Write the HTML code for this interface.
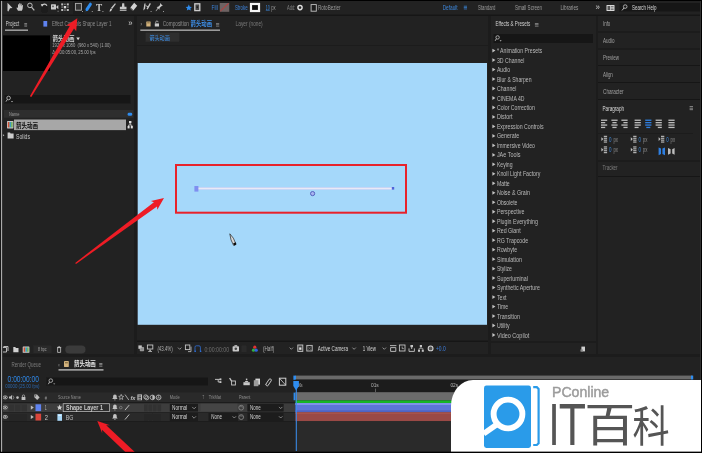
<!DOCTYPE html>
<html><head><meta charset="utf-8"><title>After Effects</title>
<style>
html,body{margin:0;padding:0;background:#232323}
body{width:702px;height:453px;overflow:hidden}
svg{display:block;position:absolute;left:0;top:0}
text{font-family:"Liberation Sans","Noto Sans CJK SC",sans-serif;white-space:pre}
</style></head><body>
<svg width="702" height="453" viewBox="0 0 702 453">
<defs><filter id="sb" x="0" y="0" width="100%" height="100%" filterUnits="userSpaceOnUse"><feGaussianBlur stdDeviation="0.35"/></filter></defs>
<g filter="url(#sb)">
<rect x="0" y="0" width="702" height="453" fill="#232323" />
<rect x="0" y="14.5" width="702" height="1.5" fill="#141414" />
<rect x="134.4" y="16" width="2" height="340" fill="#1a1a1a" />
<rect x="488.5" y="16" width="2.5" height="340" fill="#1a1a1a" />
<rect x="596" y="16" width="2" height="340" fill="#1a1a1a" />
<rect x="0" y="354.5" width="702" height="2.5" fill="#1a1a1a" />
<path d="M7.5 2.8l5 5.2l-2.5 0.3l-1.6 3.2l-0.9-0.4z" fill="#c8c8c8" />
<path d="M18 10.8l-1.4-2.6l0.3-0.9l1.1 0.7v-3.6l0.9-0.2l0.3 2v-2.9l1-0.1l0.2 2.9l0.3-2.5l0.9 0.1l0.1 2.9l0.5-1.7l0.8 0.3l-0.4 3.7l-0.8 1.9z" fill="#c8c8c8" />
<circle cx="29.9" cy="5.4" r="2.3" fill="none" stroke="#bdbdbd" stroke-width="1"/>
<path d="M31.5 7.2l2.8 3.2" fill="none" stroke="#bdbdbd" stroke-width="1.2" />
<circle cx="44.3" cy="9.4" r="3.6" fill="#1b1b1b"/>
<path d="M42 6a2.6 2.6 0 0 1 4.9 -0.2" fill="none" stroke="#c8c8c8" stroke-width="1.2" />
<path d="M40.8 4l2.8 0.2l-1.6 2.6z" fill="#c8c8c8" />
<rect x="51" y="4.2" width="5" height="5.4" fill="#cccccc" rx="0.6"/>
<path d="M56 6.9l2.3-2v4.4z" fill="#cccccc" />
<rect x="52.2" y="5.6" width="1.6" height="1.6" fill="#555" />
<path d="M57.6 10.8h1v1h-1z" fill="#999" />
<rect x="61.2" y="3.4" width="2" height="2" fill="#bdbdbd" />
<rect x="66.8" y="3.4" width="2" height="2" fill="#bdbdbd" />
<rect x="61.2" y="9" width="2" height="2" fill="#bdbdbd" />
<rect x="66.8" y="9" width="2" height="2" fill="#bdbdbd" />
<rect x="64.2" y="3.6" width="1.4" height="1.4" fill="#8c8c8c" />
<rect x="61.4" y="6.4" width="1.4" height="1.4" fill="#8c8c8c" />
<rect x="67.2" y="6.4" width="1.4" height="1.4" fill="#8c8c8c" />
<rect x="64.2" y="9.4" width="1.4" height="1.4" fill="#8c8c8c" />
<rect x="63.8" y="6" width="2.4" height="2.4" fill="#dcdcdc" />
<rect x="73.4" y="1.6" width="10.4" height="12.4" fill="#1c1c1c" />
<rect x="75.4" y="3.4" width="6" height="6.8" fill="#333" stroke="#b0b0b0" stroke-width="0.9"/>
<path d="M82 11h1v1h-1z" fill="#999" />
<path d="M87 9.4L90.4 4.2" fill="none" stroke="#2f8df0" stroke-width="3" stroke-linecap="round"/>
<path d="M85.6 11.4l0.6-2.2l1.6 1z" fill="#2f8df0" />
<path d="M91.8 11h1v1h-1z" fill="#999" />
<text x="96" y="10.6" font-size="10.6" fill="#cccccc" style="font-family:'Liberation Serif',serif;font-weight:bold" textLength="6.2" lengthAdjust="spacingAndGlyphs">T</text>
<path d="M102.4 11h1v1h-1z" fill="#999" />
<path d="M115 3.2l0.9 0.8l-3.8 5l-1.2-0.9z" fill="#c8c8c8" />
<path d="M110.6 8.4l1.6 1.2l-1.4 1.6l-1.4 0.2z" fill="#d8d8d8" />
<path d="M122.2 3.2h2l0.3 3.6h2v2.4h-6.6v-2.4h2z" fill="#c8c8c8" />
<rect x="119.8" y="9.8" width="6.7" height="1" fill="#c8c8c8" />
<path d="M134.2 2.8l3 3l-3.8 4.6l-3-2.8z" fill="#d4d4d4" />
<path d="M130.4 7.6l3 2.8l-0.9 0.6l-2.7-2.4z" fill="#5a5a5a" />
<path d="M144.4 3.4l1.2 0.2l-0.5 5.2l-1.8 1.8z M149.8 3l1.1 0.7l-3.2 5.8l-1.2-0.7z" fill="#c8c8c8" />
<path d="M145.6 5.6l2.6 1.2" fill="none" stroke="#c8c8c8" stroke-width="0.9" />
<path d="M150.6 11h1v1h-1z" fill="#999" />
<path d="M160 3l2.8 2.8l-1.5 0.4l-1.7 1.9l-0.2 1.6l-1.1-1.1l-2.3 2.7l-0.4-0.3l2.1-2.9l-1.1-1.1l1.6-0.2l1.9-1.9z" fill="#cccccc" />
<path d="M163 11h1v1h-1z" fill="#999" />
<path d="M188.8 4.6l1 2.1l2.1 0.2l-1.6 1.5l0.5 2.2l-2-1.1l-2 1.1l0.5-2.2l-1.6-1.5l2.1-0.2z" fill="#2f8df0" />
<rect x="194.8" y="3.8" width="5" height="6.8" fill="#444" stroke="#cccccc" stroke-width="1.3"/>
<rect x="196.6" y="6.4" width="1.4" height="1.6" fill="#1a1a1a" />
<text x="211.4" y="9.9" font-size="6.3" fill="#3b80d8" textLength="6.4" lengthAdjust="spacingAndGlyphs" >Fill</text>
<rect x="219.8" y="3" width="9.4" height="8.8" fill="#6e6464" />
<path d="M220.4 11l8.2-7.6" fill="none" stroke="#d03030" stroke-width="0.9" />
<text x="234.9" y="9.9" font-size="6.3" fill="#3b80d8" textLength="12.8" lengthAdjust="spacingAndGlyphs" >Stroke</text>
<rect x="251" y="4" width="8" height="7" fill="#0a0a0a" stroke="#f4f4f4" stroke-width="2.2"/>
<text x="265.8" y="9.6" font-size="6.3" fill="#3b86dc" textLength="4" lengthAdjust="spacingAndGlyphs" >10</text>
<rect x="265.8" y="10.4" width="4" height="0.5" fill="#3b86dc" />
<text x="271.2" y="9.6" font-size="6.3" fill="#9a9a9a" textLength="4.3" lengthAdjust="spacingAndGlyphs" >px</text>
<text x="286.9" y="9.9" font-size="6.3" fill="#7e7e7e" textLength="8.5" lengthAdjust="spacingAndGlyphs" >Add:</text>
<circle cx="300" cy="7.6" r="2.1" fill="#222" stroke="#e0e0e0" stroke-width="1.4"/>
<rect x="311.1" y="4.6" width="5.2" height="6.6" fill="#1c1c1c" stroke="#c4c4c4" stroke-width="0.9"/>
<text x="318" y="9.6" font-size="6.3" fill="#9a9a9a" textLength="22.6" lengthAdjust="spacingAndGlyphs" >RotoBezier</text>
<text x="442.7" y="9.6" font-size="6.3" fill="#3b86dc" textLength="15" lengthAdjust="spacingAndGlyphs" >Default</text>
<rect x="463.8" y="5.8" width="3.2" height="0.7" fill="#3b86dc" />
<rect x="463.8" y="7.199999999999999" width="3.2" height="0.7" fill="#3b86dc" />
<rect x="463.8" y="8.6" width="3.2" height="0.7" fill="#3b86dc" />
<text x="478" y="9.6" font-size="6.3" fill="#9a9a9a" textLength="17.4" lengthAdjust="spacingAndGlyphs" >Standard</text>
<text x="515" y="9.6" font-size="6.3" fill="#9a9a9a" textLength="27" lengthAdjust="spacingAndGlyphs" >Small Screen</text>
<text x="560.5" y="9.6" font-size="6.3" fill="#9a9a9a" textLength="17.8" lengthAdjust="spacingAndGlyphs" >Libraries</text>
<text x="595.6" y="10.2" font-size="8.5" fill="#d0d0d0" textLength="4.4" lengthAdjust="spacingAndGlyphs" >»</text>
<rect x="606.5" y="5" width="8" height="6" fill="#d8d8d8" rx="0.5"/>
<rect x="607.5" y="6" width="2.6" height="4" fill="#555" />
<rect x="610.8" y="6.2" width="2.8" height="0.7" fill="#555" />
<rect x="610.8" y="7.7" width="2.8" height="0.7" fill="#555" />
<rect x="610.8" y="9.2" width="2.8" height="0.7" fill="#555" />
<rect x="619.6" y="3" width="80.4" height="8.8" fill="#191919" />
<circle cx="625.2" cy="6.6" r="1.8" fill="none" stroke="#c8c8c8" stroke-width="0.8"/>
<path d="M624 8L622 10.4" fill="none" stroke="#c8c8c8" stroke-width="0.9" />
<text x="632" y="9.6" font-size="6.3" fill="#d6d6d6" textLength="24.4" lengthAdjust="spacingAndGlyphs" >Search Help</text>
<rect x="3" y="35.5" width="47" height="35.5" fill="#000" />
<text x="52.5" y="41.3" font-size="6.6" fill="#d2d2d2" textLength="22" lengthAdjust="spacingAndGlyphs" font-weight="bold">箭头动画</text>
<path d="M76.3 37.6h3.6l-1.8 2.6z" fill="#d2d2d2" />
<text x="52.3" y="47.4" font-size="5.6" fill="#a8a8a8" textLength="58.4" lengthAdjust="spacingAndGlyphs" >1920 x 1080  (960 x 540) (1.00)</text>
<text x="52.3" y="54.3" font-size="5.6" fill="#a8a8a8" textLength="43.4" lengthAdjust="spacingAndGlyphs" >Δ 0:00:05:00, 25.00 fps</text>
<text x="5.7" y="25.6" font-size="6.3" fill="#d0d0d0" textLength="13.5" lengthAdjust="spacingAndGlyphs" >Project</text>
<rect x="24.3" y="23.4" width="2.8" height="0.6" fill="#b0b0b0" />
<rect x="24.3" y="24.599999999999998" width="2.8" height="0.6" fill="#b0b0b0" />
<rect x="24.3" y="25.799999999999997" width="2.8" height="0.6" fill="#b0b0b0" />
<rect x="5" y="29.6" width="23" height="1.1" fill="#cfcfcf" />
<rect x="43.4" y="21" width="3.8" height="5.6" fill="#5f83f0" />
<text x="52" y="25.6" font-size="6.3" fill="#8c8c8c" textLength="59.4" lengthAdjust="spacingAndGlyphs" >Effect Controls Shape Layer 1</text>
<text x="128.2" y="26.2" font-size="8.5" fill="#d0d0d0" textLength="4.2" lengthAdjust="spacingAndGlyphs" >»</text>
<rect x="4.4" y="94.8" width="126.2" height="9" fill="#191919" />
<circle cx="8.6" cy="98" r="1.8" fill="none" stroke="#c0c0c0" stroke-width="0.8"/>
<path d="M7.4 99.4L6 101.6" fill="none" stroke="#c0c0c0" stroke-width="0.9" />
<path d="M11 101h2l-1 1.2z" fill="#c0c0c0" />
<rect x="4" y="110" width="129.5" height="7.6" fill="#2f2f2f" />
<text x="9" y="115.6" font-size="5" fill="#9a9a9a" textLength="10.5" lengthAdjust="spacingAndGlyphs" >Name</text>
<rect x="127.6" y="112.8" width="4.6" height="3" fill="#2f8df0" rx="1.4"/>
<rect x="14" y="119.5" width="112" height="10.6" fill="#a7a7a7" />
<text x="16" y="127.6" font-size="6.6" fill="#0c0c0c" textLength="22" lengthAdjust="spacingAndGlyphs" font-weight="bold">箭头动画</text>
<rect x="7" y="121" width="6.4" height="7.4" fill="#c9c9c9" rx="0.6"/>
<rect x="7.8" y="122" width="1.8" height="5.4" fill="#d05030" />
<rect x="9.6" y="122" width="1.6" height="5.4" fill="#3aa0c0" />
<rect x="11.2" y="122" width="1.4" height="5.4" fill="#6ab050" />
<rect x="129" y="121" width="2.4" height="2.2" fill="#e0e0e0" />
<rect x="127.6" y="126" width="2" height="2.4" fill="#e0e0e0" />
<rect x="130.8" y="126" width="2" height="2.4" fill="#e0e0e0" />
<path d="M130.2 123v2M128.6 126v-1h3.2v1" fill="none" stroke="#e0e0e0" stroke-width="0.7" />
<path d="M1.8 133.6l2.6 1.7l-2.6 1.7z" fill="#c0c0c0" />
<path d="M7.6 132.6h2.4l0.6 0.8h3v5h-6z" fill="#cdcdcd" />
<text x="16" y="138.6" font-size="6.6" fill="#c4c4c4" textLength="14" lengthAdjust="spacingAndGlyphs" >Solids</text>
<path d="M2 347.5h4.5v4.5h-4.5z M3.5 346.5h4.5v4.5" fill="none" stroke="#c8c8c8" stroke-width="0.9" />
<path d="M13.3 347h2l0.6 0.9h2.6v4.4h-5.2z" fill="#d0d0d0" />
<rect x="22.7" y="346.4" width="6.7" height="6.4" fill="#cfcfcf" rx="0.6"/>
<rect x="23.6" y="347.4" width="1.8" height="4.4" fill="#d05030" />
<rect x="25.4" y="347.4" width="1.7" height="4.4" fill="#3aa0c0" />
<rect x="27.1" y="347.4" width="1.5" height="4.4" fill="#6ab050" />
<rect x="33.3" y="345.6" width="18" height="7.6" fill="#2c2c2c" />
<text x="38" y="351.4" font-size="5.6" fill="#a0a0a0" textLength="8.5" lengthAdjust="spacingAndGlyphs" >8 bpc</text>
<path d="M57.6 347.6h3v4.8h-3z M57 347.4h4.2 M58.4 346.6h1.4" fill="none" stroke="#c4c4c4" stroke-width="0.8" />
<rect x="65.3" y="345.4" width="20.2" height="8" fill="#3b3b3b" rx="4"/>
<rect x="137" y="44.8" width="351.5" height="1" fill="#181818" />
<rect x="136.4" y="45.8" width="352.1" height="295" fill="#202020" />
<rect x="137.7" y="63" width="349.3" height="261.8" fill="#a5d8fa" />
<text x="140.6" y="25.6" font-size="5.5" fill="#8a8a8a" textLength="1.8" lengthAdjust="spacingAndGlyphs" >×</text>
<rect x="146.3" y="21.4" width="4.3" height="5.2" fill="#d2b27c" rx="0.4"/>
<rect x="147.2" y="22.2" width="2.5" height="1.2" fill="#8d744a" />
<rect x="154.8" y="23.4" width="4.2" height="3.1" fill="#c8c8c8" />
<path d="M155.7 23.4v-1.2a1.2 1.2 0 0 1 2.4 0" fill="none" stroke="#c8c8c8" stroke-width="0.7" />
<text x="162.7" y="25.8" font-size="6.3" fill="#8e8e8e" textLength="26.3" lengthAdjust="spacingAndGlyphs" >Composition</text>
<text x="190.6" y="26" font-size="6.6" fill="#3d8fe8" textLength="21.4" lengthAdjust="spacingAndGlyphs" font-weight="bold">箭头动画</text>
<rect x="216" y="23.2" width="3.2" height="0.6" fill="#a0a0a0" />
<rect x="216" y="24.5" width="3.2" height="0.6" fill="#a0a0a0" />
<rect x="216" y="25.8" width="3.2" height="0.6" fill="#a0a0a0" />
<rect x="140.3" y="29.6" width="79.7" height="1.1" fill="#cfcfcf" />
<text x="235.6" y="25.8" font-size="6.3" fill="#7a7a7a" textLength="27.1" lengthAdjust="spacingAndGlyphs" >Layer (none)</text>
<rect x="145.6" y="32.6" width="33.6" height="9" fill="#2f2f2f" />
<text x="149.4" y="39.6" font-size="6.2" fill="#3d8fe8" textLength="20.4" lengthAdjust="spacingAndGlyphs" >箭头动画</text>
<rect x="176" y="165" width="230" height="47.7" fill="none" stroke="#e8202a" stroke-width="2"/>
<rect x="198" y="187.5" width="194" height="2" fill="#e9e9f6" />
<rect x="198" y="187.2" width="194" height="0.5" fill="#c4c8f4" />
<rect x="198" y="189.3" width="194" height="0.4" fill="#c4c8f4" />
<rect x="194.4" y="186" width="4" height="5.6" fill="#7f8ff0" />
<rect x="391.8" y="187" width="2.4" height="2.6" fill="#4f63d8" />
<circle cx="312.6" cy="193.6" r="2.1" fill="#a9b4f0" stroke="#4c58b8" stroke-width="0.9"/>
<path d="M229.8 233.8l3.6 4.4l2.4 5.6l-2.2 1.6l-2.6-5.6z" fill="#d8d8d8" stroke="#222" stroke-width="0.7" />
<path d="M233 243.4l2.8-1.2l0.6 2.4l-2 1.2z" fill="#111" />
<rect x="137" y="340.8" width="351.5" height="1" fill="#181818" />
<path d="M138.4 345.4h3.4v3.4h-3.4z" fill="#c4c4c4" />
<path d="M140.2 347.4h3.4v3.4h-3.4z" fill="#8c8c8c" stroke="#c4c4c4" stroke-width="0.6" />
<rect x="147.4" y="345" width="5.4" height="4" fill="none" stroke="#c4c4c4" stroke-width="0.9"/>
<rect x="149.4" y="349.6" width="1.4" height="1.4" fill="#c4c4c4" />
<rect x="148.2" y="351" width="3.8" height="0.8" fill="#c4c4c4" />
<text x="157.4" y="351" font-size="6.3" fill="#b0b0b0" textLength="15.3" lengthAdjust="spacingAndGlyphs" >(43.4%)</text>
<path d="M178 347.6l1.7 1.7l1.7-1.7" fill="none" stroke="#a8a8a8" stroke-width="0.8" />
<rect x="185.4" y="345" width="4.4" height="4.6" fill="none" stroke="#c4c4c4" stroke-width="0.9"/>
<path d="M188 351.6h3v-5" fill="none" stroke="#c4c4c4" stroke-width="0.8" />
<path d="M195 351.6v-4.4a1.4 1.4 0 0 1 1.4-1.4h2.6a1.4 1.4 0 0 1 1.4 1.4v4.4" fill="none" stroke="#2e6fd6" stroke-width="0.8" />
<rect x="194.5" y="350.6" width="1.4" height="1.4" fill="#2e6fd6" />
<rect x="199.9" y="350.6" width="1.4" height="1.4" fill="#2e6fd6" />
<text x="204.4" y="351.6" font-size="6.3" fill="#6e6e6e" textLength="24.7" lengthAdjust="spacingAndGlyphs" >0:00:00:00</text>
<rect x="232.6" y="346.2" width="6.4" height="5.2" fill="#c8c8c8" rx="0.7"/>
<rect x="234.4" y="345.2" width="2.8" height="1.2" fill="#c8c8c8" />
<circle cx="235.8" cy="348.8" r="1.3" fill="#444"/>
<rect x="241.4" y="345.6" width="5.4" height="6.4" fill="#2b2b2b" />
<circle cx="254.8" cy="347.2" r="1.6" fill="#e03030"/>
<circle cx="253.5" cy="350.2" r="1.6" fill="#30b040"/>
<circle cx="256.2" cy="350.2" r="1.6" fill="#3060e0"/>
<text x="263" y="351.2" font-size="6.3" fill="#b0b0b0" textLength="11.2" lengthAdjust="spacingAndGlyphs" >(Half)</text>
<path d="M289.6 347.6l1.7 1.7l1.7-1.7" fill="none" stroke="#a8a8a8" stroke-width="0.8" />
<rect x="297.8" y="345" width="5" height="6.4" fill="#444" stroke="#c4c4c4" stroke-width="0.9"/>
<rect x="299.2" y="347.4" width="2.2" height="2.4" fill="#e0e0e0" />
<rect x="306.8" y="345.4" width="5.4" height="5.6" fill="none" stroke="#c4c4c4" stroke-width="0.9"/>
<path d="M307 345.6l5 5.2M312 345.6l-5 5.2" fill="none" stroke="#888" stroke-width="0.5" />
<text x="317.8" y="351.2" font-size="6.3" fill="#d6d6d6" textLength="30.2" lengthAdjust="spacingAndGlyphs" >Active Camera</text>
<path d="M352.4 347.6l1.7 1.7l1.7-1.7" fill="none" stroke="#a8a8a8" stroke-width="0.8" />
<text x="362.8" y="351.2" font-size="6.3" fill="#d6d6d6" textLength="13.2" lengthAdjust="spacingAndGlyphs" >1 View</text>
<path d="M382.6 347.6l1.7 1.7l1.7-1.7" fill="none" stroke="#a8a8a8" stroke-width="0.8" />
<path d="M390 345.6h6.4M390.6 347.6h5.2v3.8h-5.2z" fill="none" stroke="#c4c4c4" stroke-width="0.9" />
<rect x="399.4" y="345" width="5.6" height="6" fill="none" stroke="#c4c4c4" stroke-width="0.9"/>
<path d="M402.2 346.6v2h1.6" fill="none" stroke="#c4c4c4" stroke-width="0.7" />
<path d="M409 348.4v3h5.4v-3M411.7 345v4" fill="none" stroke="#c4c4c4" stroke-width="0.9" />
<rect x="410.4" y="345" width="2.6" height="2.2" fill="#c4c4c4" />
<rect x="419.8" y="345" width="2.2" height="2.2" fill="#c4c4c4" />
<rect x="418" y="349.6" width="2" height="2.2" fill="#c4c4c4" />
<rect x="421.8" y="349.6" width="2" height="2.2" fill="#c4c4c4" />
<path d="M420.9 347v1.4M419 349.6v-1.2h3.8v1.2" fill="none" stroke="#c4c4c4" stroke-width="0.6" />
<circle cx="430.6" cy="348.4" r="2.4" fill="#555" stroke="#d0d0d0" stroke-width="1.1"/>
<text x="436" y="351.2" font-size="6.3" fill="#3b7fe0" textLength="9.7" lengthAdjust="spacingAndGlyphs" >+0.0</text>
<text x="495.6" y="26.4" font-size="6.3" fill="#d0d0d0" textLength="34.6" lengthAdjust="spacingAndGlyphs" >Effects &amp; Presets</text>
<rect x="534.9" y="23.2" width="3.6" height="0.6" fill="#b0b0b0" />
<rect x="534.9" y="24.5" width="3.6" height="0.6" fill="#b0b0b0" />
<rect x="534.9" y="25.8" width="3.6" height="0.6" fill="#b0b0b0" />
<rect x="493.5" y="34" width="99.5" height="9" fill="#191919" />
<circle cx="497.6" cy="37.4" r="1.7" fill="none" stroke="#c0c0c0" stroke-width="0.8"/>
<path d="M496.4 38.7L495.2 40.8" fill="none" stroke="#c0c0c0" stroke-width="0.9" />
<path d="M499.6 40.2h2l-1 1.2z" fill="#c0c0c0" />
<text x="496.9" y="53.1" font-size="6.9" fill="#b9b9b9" textLength="45.3" lengthAdjust="spacingAndGlyphs" >* Animation Presets</text>
<path d="M492.4 48.7l3 1.9l-3 1.9z" fill="#c4c4c4" />
<text x="496.9" y="62.58" font-size="6.9" fill="#b9b9b9" textLength="27.5" lengthAdjust="spacingAndGlyphs" >3D Channel</text>
<path d="M492.4 58.18l3 1.9l-3 1.9z" fill="#c4c4c4" />
<text x="496.9" y="72.06" font-size="6.9" fill="#b9b9b9" textLength="13.2" lengthAdjust="spacingAndGlyphs" >Audio</text>
<path d="M492.4 67.66l3 1.9l-3 1.9z" fill="#c4c4c4" />
<text x="496.9" y="81.54" font-size="6.9" fill="#b9b9b9" textLength="34.6" lengthAdjust="spacingAndGlyphs" >Blur &amp; Sharpen</text>
<path d="M492.4 77.14l3 1.9l-3 1.9z" fill="#c4c4c4" />
<text x="496.9" y="91.02" font-size="6.9" fill="#b9b9b9" textLength="19.5" lengthAdjust="spacingAndGlyphs" >Channel</text>
<path d="M492.4 86.62l3 1.9l-3 1.9z" fill="#c4c4c4" />
<text x="496.9" y="100.5" font-size="6.9" fill="#b9b9b9" textLength="27.6" lengthAdjust="spacingAndGlyphs" >CINEMA 4D</text>
<path d="M492.4 96.1l3 1.9l-3 1.9z" fill="#c4c4c4" />
<text x="496.9" y="109.98" font-size="6.9" fill="#b9b9b9" textLength="38" lengthAdjust="spacingAndGlyphs" >Color Correction</text>
<path d="M492.4 105.58l3 1.9l-3 1.9z" fill="#c4c4c4" />
<text x="496.9" y="119.46" font-size="6.9" fill="#b9b9b9" textLength="15.6" lengthAdjust="spacingAndGlyphs" >Distort</text>
<path d="M492.4 115.06l3 1.9l-3 1.9z" fill="#c4c4c4" />
<text x="496.9" y="128.94" font-size="6.9" fill="#b9b9b9" textLength="46.6" lengthAdjust="spacingAndGlyphs" >Expression Controls</text>
<path d="M492.4 124.54l3 1.9l-3 1.9z" fill="#c4c4c4" />
<text x="496.9" y="138.42" font-size="6.9" fill="#b9b9b9" textLength="22.2" lengthAdjust="spacingAndGlyphs" >Generate</text>
<path d="M492.4 134.02l3 1.9l-3 1.9z" fill="#c4c4c4" />
<text x="496.9" y="147.9" font-size="6.9" fill="#b9b9b9" textLength="38" lengthAdjust="spacingAndGlyphs" >Immersive Video</text>
<path d="M492.4 143.5l3 1.9l-3 1.9z" fill="#c4c4c4" />
<text x="496.9" y="157.38" font-size="6.9" fill="#b9b9b9" textLength="23.5" lengthAdjust="spacingAndGlyphs" >JAe Tools</text>
<path d="M492.4 152.98l3 1.9l-3 1.9z" fill="#c4c4c4" />
<text x="496.9" y="166.86" font-size="6.9" fill="#b9b9b9" textLength="15.6" lengthAdjust="spacingAndGlyphs" >Keying</text>
<path d="M492.4 162.46l3 1.9l-3 1.9z" fill="#c4c4c4" />
<text x="496.9" y="176.34" font-size="6.9" fill="#b9b9b9" textLength="43.5" lengthAdjust="spacingAndGlyphs" >Knoll Light Factory</text>
<path d="M492.4 171.94l3 1.9l-3 1.9z" fill="#c4c4c4" />
<text x="496.9" y="185.82" font-size="6.9" fill="#b9b9b9" textLength="12.8" lengthAdjust="spacingAndGlyphs" >Matte</text>
<path d="M492.4 181.42l3 1.9l-3 1.9z" fill="#c4c4c4" />
<text x="496.9" y="195.3" font-size="6.9" fill="#b9b9b9" textLength="33" lengthAdjust="spacingAndGlyphs" >Noise &amp; Grain</text>
<path d="M492.4 190.9l3 1.9l-3 1.9z" fill="#c4c4c4" />
<text x="496.9" y="204.78" font-size="6.9" fill="#b9b9b9" textLength="20.6" lengthAdjust="spacingAndGlyphs" >Obsolete</text>
<path d="M492.4 200.38l3 1.9l-3 1.9z" fill="#c4c4c4" />
<text x="496.9" y="214.26" font-size="6.9" fill="#b9b9b9" textLength="27.5" lengthAdjust="spacingAndGlyphs" >Perspective</text>
<path d="M492.4 209.86l3 1.9l-3 1.9z" fill="#c4c4c4" />
<text x="496.9" y="223.74" font-size="6.9" fill="#b9b9b9" textLength="41" lengthAdjust="spacingAndGlyphs" >Plugin Everything</text>
<path d="M492.4 219.34l3 1.9l-3 1.9z" fill="#c4c4c4" />
<text x="496.9" y="233.22" font-size="6.9" fill="#b9b9b9" textLength="23.8" lengthAdjust="spacingAndGlyphs" >Red Giant</text>
<path d="M492.4 228.82l3 1.9l-3 1.9z" fill="#c4c4c4" />
<text x="496.9" y="242.7" font-size="6.9" fill="#b9b9b9" textLength="31.2" lengthAdjust="spacingAndGlyphs" >RG Trapcode</text>
<path d="M492.4 238.3l3 1.9l-3 1.9z" fill="#c4c4c4" />
<text x="496.9" y="252.18" font-size="6.9" fill="#b9b9b9" textLength="20.2" lengthAdjust="spacingAndGlyphs" >Rowbyte</text>
<path d="M492.4 247.78l3 1.9l-3 1.9z" fill="#c4c4c4" />
<text x="496.9" y="261.66" font-size="6.9" fill="#b9b9b9" textLength="25" lengthAdjust="spacingAndGlyphs" >Simulation</text>
<path d="M492.4 257.26l3 1.9l-3 1.9z" fill="#c4c4c4" />
<text x="496.9" y="271.14" font-size="6.9" fill="#b9b9b9" textLength="15" lengthAdjust="spacingAndGlyphs" >Stylize</text>
<path d="M492.4 266.74l3 1.9l-3 1.9z" fill="#c4c4c4" />
<text x="496.9" y="280.62" font-size="6.9" fill="#b9b9b9" textLength="31" lengthAdjust="spacingAndGlyphs" >Superluminal</text>
<path d="M492.4 276.22l3 1.9l-3 1.9z" fill="#c4c4c4" />
<text x="496.9" y="290.1" font-size="6.9" fill="#b9b9b9" textLength="43" lengthAdjust="spacingAndGlyphs" >Synthetic Aperture</text>
<path d="M492.4 285.7l3 1.9l-3 1.9z" fill="#c4c4c4" />
<text x="496.9" y="299.58" font-size="6.9" fill="#b9b9b9" textLength="9.6" lengthAdjust="spacingAndGlyphs" >Text</text>
<path d="M492.4 295.18l3 1.9l-3 1.9z" fill="#c4c4c4" />
<text x="496.9" y="309.06" font-size="6.9" fill="#b9b9b9" textLength="11.2" lengthAdjust="spacingAndGlyphs" >Time</text>
<path d="M492.4 304.66l3 1.9l-3 1.9z" fill="#c4c4c4" />
<text x="496.9" y="318.54" font-size="6.9" fill="#b9b9b9" textLength="23" lengthAdjust="spacingAndGlyphs" >Transition</text>
<path d="M492.4 314.14l3 1.9l-3 1.9z" fill="#c4c4c4" />
<text x="496.9" y="328.02" font-size="6.9" fill="#b9b9b9" textLength="12.6" lengthAdjust="spacingAndGlyphs" >Utility</text>
<path d="M492.4 323.62l3 1.9l-3 1.9z" fill="#c4c4c4" />
<text x="496.9" y="337.5" font-size="6.9" fill="#b9b9b9" textLength="32.5" lengthAdjust="spacingAndGlyphs" >Video Copilot</text>
<path d="M492.4 333.1l3 1.9l-3 1.9z" fill="#c4c4c4" />
<rect x="491" y="341.6" width="105" height="0.8" fill="#181818" />
<path d="M581.4 346.6h3.6v4.8h-3.6z" fill="#cfcfcf" />
<path d="M580.4 349.4h2.4v2.2h-2.4z" fill="#8a8a8a" />
<text x="603" y="26.0" font-size="6.3" fill="#a0a0a0" textLength="7.3" lengthAdjust="spacingAndGlyphs" >Info</text>
<text x="603" y="42.9" font-size="6.3" fill="#a0a0a0" textLength="11.6" lengthAdjust="spacingAndGlyphs" >Audio</text>
<text x="603" y="59.8" font-size="6.3" fill="#a0a0a0" textLength="16" lengthAdjust="spacingAndGlyphs" >Preview</text>
<text x="603" y="76.7" font-size="6.3" fill="#a0a0a0" textLength="9.8" lengthAdjust="spacingAndGlyphs" >Align</text>
<text x="603" y="93.6" font-size="6.3" fill="#a0a0a0" textLength="20.6" lengthAdjust="spacingAndGlyphs" >Character</text>
<text x="602.5" y="110.5" font-size="6.3" fill="#dcdcdc" textLength="21.5" lengthAdjust="spacingAndGlyphs" >Paragraph</text>
<rect x="598" y="31.7" width="102" height="1" fill="#181818" />
<rect x="598" y="48.4" width="102" height="1" fill="#181818" />
<rect x="598" y="65" width="102" height="1" fill="#181818" />
<rect x="598" y="82" width="102" height="1" fill="#181818" />
<rect x="598" y="98.8" width="102" height="1" fill="#181818" />
<rect x="598" y="160.7" width="102" height="1" fill="#181818" />
<rect x="598" y="176.2" width="102" height="1" fill="#181818" />
<text x="602.6" y="170" font-size="6.3" fill="#7c7c7c" textLength="15" lengthAdjust="spacingAndGlyphs" >Tracker</text>
<rect x="689.6" y="106.2" width="3.4" height="0.7" fill="#a8a8a8" />
<rect x="689.6" y="107.8" width="3.4" height="0.7" fill="#a8a8a8" />
<rect x="689.6" y="109.4" width="3.4" height="0.7" fill="#a8a8a8" />
<rect x="601" y="119.6" width="6.2" height="1.3" fill="#bcbcbc" />
<rect x="601" y="122.0" width="4.2" height="1.3" fill="#bcbcbc" />
<rect x="601" y="124.4" width="6.2" height="1.3" fill="#bcbcbc" />
<rect x="601" y="126.8" width="4.2" height="1.3" fill="#bcbcbc" />
<rect x="611.4" y="119.6" width="6.2" height="1.3" fill="#bcbcbc" />
<rect x="612.4" y="122.0" width="4.2" height="1.3" fill="#bcbcbc" />
<rect x="611.4" y="124.4" width="6.2" height="1.3" fill="#bcbcbc" />
<rect x="612.4" y="126.8" width="4.2" height="1.3" fill="#bcbcbc" />
<rect x="621.4" y="119.6" width="6.2" height="1.3" fill="#bcbcbc" />
<rect x="623.4" y="122.0" width="4.2" height="1.3" fill="#bcbcbc" />
<rect x="621.4" y="124.4" width="6.2" height="1.3" fill="#bcbcbc" />
<rect x="623.4" y="126.8" width="4.2" height="1.3" fill="#bcbcbc" />
<rect x="634.6" y="119.6" width="6.2" height="1.3" fill="#bcbcbc" />
<rect x="634.6" y="122.0" width="6.2" height="1.3" fill="#bcbcbc" />
<rect x="634.6" y="124.4" width="6.2" height="1.3" fill="#bcbcbc" />
<rect x="634.6" y="126.8" width="4" height="1.3" fill="#bcbcbc" />
<rect x="645.2" y="119.6" width="6.2" height="1.3" fill="#2f7fe0" />
<rect x="645.2" y="122.0" width="6.2" height="1.3" fill="#2f7fe0" />
<rect x="645.2" y="124.4" width="6.2" height="1.3" fill="#2f7fe0" />
<rect x="646.3" y="126.8" width="4" height="1.3" fill="#2f7fe0" />
<rect x="655.6" y="119.6" width="6.2" height="1.3" fill="#bcbcbc" />
<rect x="655.6" y="122.0" width="6.2" height="1.3" fill="#bcbcbc" />
<rect x="655.6" y="124.4" width="6.2" height="1.3" fill="#bcbcbc" />
<rect x="657.8" y="126.8" width="4" height="1.3" fill="#bcbcbc" />
<rect x="668.4" y="119.6" width="6.2" height="1.3" fill="#bcbcbc" />
<rect x="668.4" y="122.0" width="6.2" height="1.3" fill="#bcbcbc" />
<rect x="668.4" y="124.4" width="6.2" height="1.3" fill="#bcbcbc" />
<rect x="668.4" y="126.8" width="6.2" height="1.3" fill="#bcbcbc" />
<rect x="598" y="133.4" width="95" height="0.6" fill="#1c1c1c" />
<rect x="603.8" y="135.8" width="3.3" height="1.1" fill="#c0c0c0" />
<rect x="603.8" y="137.7" width="3.3" height="1.1" fill="#c0c0c0" />
<rect x="603.8" y="139.6" width="3.3" height="1.1" fill="#c0c0c0" />
<rect x="603.8" y="141.5" width="3.3" height="1.1" fill="#c0c0c0" />
<path d="M601.4 137.20000000000002l2 1.9l-2 1.9z" fill="#c0c0c0" />
<text x="609.0" y="141.8" font-size="6.3" fill="#3b86dc" textLength="2.5" lengthAdjust="spacingAndGlyphs" >0</text>
<text x="613.4" y="141.8" font-size="6.3" fill="#8a8a8a" textLength="4.6" lengthAdjust="spacingAndGlyphs" >px</text>
<rect x="633.1999999999999" y="135.8" width="3.3" height="1.1" fill="#c0c0c0" />
<rect x="633.1999999999999" y="137.7" width="3.3" height="1.1" fill="#c0c0c0" />
<rect x="633.1999999999999" y="139.6" width="3.3" height="1.1" fill="#c0c0c0" />
<rect x="633.1999999999999" y="141.5" width="3.3" height="1.1" fill="#c0c0c0" />
<path d="M630.8 137.20000000000002l2 1.9l-2 1.9z" fill="#c0c0c0" />
<text x="638.4" y="141.8" font-size="6.3" fill="#3b86dc" textLength="2.5" lengthAdjust="spacingAndGlyphs" >0</text>
<text x="642.8" y="141.8" font-size="6.3" fill="#8a8a8a" textLength="4.6" lengthAdjust="spacingAndGlyphs" >px</text>
<rect x="661.0" y="135.8" width="3.3" height="1.1" fill="#c0c0c0" />
<rect x="661.0" y="137.7" width="3.3" height="1.1" fill="#c0c0c0" />
<rect x="661.0" y="139.6" width="3.3" height="1.1" fill="#c0c0c0" />
<rect x="661.0" y="141.5" width="3.3" height="1.1" fill="#c0c0c0" />
<path d="M658.6 137.20000000000002l2 1.9l-2 1.9z" fill="#c0c0c0" />
<text x="666.2" y="141.8" font-size="6.3" fill="#3b86dc" textLength="2.5" lengthAdjust="spacingAndGlyphs" >0</text>
<text x="670.6" y="141.8" font-size="6.3" fill="#8a8a8a" textLength="4.6" lengthAdjust="spacingAndGlyphs" >px</text>
<rect x="603.8" y="146.4" width="3.3" height="1.1" fill="#c0c0c0" />
<rect x="603.8" y="148.3" width="3.3" height="1.1" fill="#c0c0c0" />
<rect x="603.8" y="150.2" width="3.3" height="1.1" fill="#c0c0c0" />
<rect x="603.8" y="152.1" width="3.3" height="1.1" fill="#c0c0c0" />
<path d="M601.4 147.8l2 1.9l-2 1.9z" fill="#c0c0c0" />
<text x="609.0" y="152.4" font-size="6.3" fill="#3b86dc" textLength="2.5" lengthAdjust="spacingAndGlyphs" >0</text>
<text x="613.4" y="152.4" font-size="6.3" fill="#8a8a8a" textLength="4.6" lengthAdjust="spacingAndGlyphs" >px</text>
<rect x="633.1999999999999" y="146.4" width="3.3" height="1.1" fill="#c0c0c0" />
<rect x="633.1999999999999" y="148.3" width="3.3" height="1.1" fill="#c0c0c0" />
<rect x="633.1999999999999" y="150.2" width="3.3" height="1.1" fill="#c0c0c0" />
<rect x="633.1999999999999" y="152.1" width="3.3" height="1.1" fill="#c0c0c0" />
<path d="M630.8 147.8l2 1.9l-2 1.9z" fill="#c0c0c0" />
<text x="638.4" y="152.4" font-size="6.3" fill="#3b86dc" textLength="2.5" lengthAdjust="spacingAndGlyphs" >0</text>
<text x="642.8" y="152.4" font-size="6.3" fill="#8a8a8a" textLength="4.6" lengthAdjust="spacingAndGlyphs" >px</text>
<path d="M658.6 147.4l2.4 1.2v5.4l-2.4 1.2z M665 147.4l-2.6 1.2v5.4l2.6 1.2z" fill="#2f7fe0" />
<path d="M668 148l2.6 1.2v4.4l-2.6 1.2z M674.6 148l-2.4 1.2v4.4l2.4 1.2z" fill="#bcbcbc" />
<text x="11.6" y="366.8" font-size="6.3" fill="#7c7c7c" textLength="29.4" lengthAdjust="spacingAndGlyphs" >Render Queue</text>
<text x="58" y="366.6" font-size="5.5" fill="#8a8a8a" textLength="1.8" lengthAdjust="spacingAndGlyphs" >×</text>
<rect x="64" y="361" width="4.8" height="6" fill="#d2b27c" rx="0.4"/>
<rect x="65" y="362" width="2.8" height="1.4" fill="#8d744a" />
<text x="74" y="366.2" font-size="6.8" fill="#e6e6e6" textLength="21.8" lengthAdjust="spacingAndGlyphs" font-weight="bold">箭头动画</text>
<rect x="99.2" y="363.0" width="3.2" height="0.7" fill="#a8a8a8" />
<rect x="99.2" y="364.4" width="3.2" height="0.7" fill="#a8a8a8" />
<rect x="99.2" y="365.8" width="3.2" height="0.7" fill="#a8a8a8" />
<rect x="58.5" y="369.3" width="45" height="1.2" fill="#cfcfcf" />
<text x="7.6" y="382.4" font-size="8.4" fill="#2f86e6" textLength="31.4" lengthAdjust="spacingAndGlyphs" >0:00:00:00</text>
<text x="5.2" y="388.2" font-size="4.6" fill="#2a64a8" textLength="34.4" lengthAdjust="spacingAndGlyphs" >00000 (25.00 fps)</text>
<rect x="46.5" y="377.2" width="161.4" height="8.6" fill="#191919" />
<circle cx="50.8" cy="380.6" r="1.8" fill="none" stroke="#c0c0c0" stroke-width="0.8"/>
<path d="M49.6 382L48.3 384.2" fill="none" stroke="#c0c0c0" stroke-width="0.9" />
<path d="M53.2 383.4h2l-1 1.2z" fill="#c0c0c0" />
<path d="M215 379.4h3.2v2.6h2.4M218.2 379.4h2.4" fill="none" stroke="#c8c8c8" stroke-width="0.9" />
<rect x="219.6" y="378.4" width="1.8" height="1.8" fill="#c8c8c8" />
<rect x="219.6" y="381.2" width="1.8" height="1.8" fill="#c8c8c8" />
<path d="M229.6 378l2 3.2" fill="#c8c8c8" stroke="#c8c8c8" stroke-width="1.3" />
<rect x="231.6" y="381" width="3.8" height="4" fill="none" stroke="#c8c8c8" stroke-width="0.9"/>
<path d="M243.4 382.2h6.4v3h-6.4z" fill="#c8c8c8" />
<path d="M244.8 382a1.9 1.9 0 0 1 3.6 0z" fill="#c8c8c8" />
<rect x="245.9" y="378.6" width="1.4" height="1.4" fill="#c8c8c8" />
<rect x="255.4" y="378.6" width="4.6" height="6" fill="#d4d4d4" />
<rect x="253.8" y="380.2" width="4.6" height="6" fill="#9c9c9c" />
<path d="M265.6 384.6l3.6-5.4a1.3 1.3 0 0 1 2 1.6l-3.4 5a0.9 0.9 0 0 1-1.4-1z" fill="none" stroke="#c8c8c8" stroke-width="1" />
<rect x="279.4" y="378.2" width="6.4" height="7" fill="none" stroke="#d0d0d0" stroke-width="1"/>
<path d="M279.6 378.4l6 6.6" fill="none" stroke="#d0d0d0" stroke-width="0.8" />
<rect x="2.2" y="392.6" width="293" height="9.6" fill="#2c2c2c" />
<rect x="2.2" y="402.6" width="293" height="0.7" fill="#1b1b1b" />
<rect x="2.2" y="403.3" width="293" height="8.7" fill="#3d3d3d" />
<rect x="2.2" y="412" width="293" height="0.7" fill="#1f1f1f" />
<rect x="2.2" y="412.7" width="293" height="8.7" fill="#2c2c2c" />
<rect x="2.2" y="421.4" width="293" height="0.6" fill="#1c1c1c" />
<ellipse cx="5.2" cy="397.4" rx="2.2" ry="1.5" fill="none" stroke="#c8c8c8" stroke-width="0.8"/>
<circle cx="5.2" cy="397.4" r="0.8" fill="#c8c8c8"/>
<path d="M9 396.4h1.4l1.6-1.4v4.8l-1.6-1.4h-1.4z" fill="#bdbdbd" />
<path d="M12.8 395.6a2.6 2.6 0 0 1 0 3.8" fill="none" stroke="#bdbdbd" stroke-width="0.6" />
<circle cx="17.5" cy="397.6" r="1.3" fill="#bdbdbd"/>
<rect x="21.6" y="397" width="3.8" height="3" fill="#bdbdbd" />
<path d="M22.4 397v-1a1.1 1.1 0 0 1 2.2 0v1" fill="none" stroke="#bdbdbd" stroke-width="0.7" />
<path d="M34.4 394.6h2.6l2.6 2.8l-2.4 2.6l-2.8-2.8z" fill="#bdbdbd" />
<circle cx="35.6" cy="395.8" r="0.6" fill="#333"/>
<text x="44.8" y="399.6" font-size="5.4" fill="#9a9a9a" textLength="2.2" lengthAdjust="spacingAndGlyphs" >#</text>
<text x="58" y="399.4" font-size="5.6" fill="#8c8c8c" textLength="22.7" lengthAdjust="spacingAndGlyphs" >Source Name</text>
<path d="M112.2 399.0h5.4l-0.9-1.2v-1.6a1.8 1.8 0 0 0-3.6 0v1.6z" fill="#bdbdbd" />
<rect x="114.4" y="399.4" width="1" height="0.9" fill="#bdbdbd" />
<path d="M121.2 394.4l0.7 1.8l1.8 0.2l-1.4 1.2l0.4 1.9l-1.5-1l-1.5 1l0.4-1.9l-1.4-1.2l1.8-0.2z" fill="none" stroke="#bdbdbd" stroke-width="0.7" />
<path d="M125 394.6l3.8 5.4" fill="none" stroke="#bdbdbd" stroke-width="0.8" />
<text x="130.4" y="399.8" font-size="6" fill="#c0c0c0" textLength="5" lengthAdjust="spacingAndGlyphs" font-style="italic" font-weight="bold">fx</text>
<rect x="137.4" y="394.4" width="4.6" height="5.8" fill="#bdbdbd" />
<rect x="138.4" y="395.4" width="2.6" height="1.1" fill="#444" />
<rect x="138.4" y="397" width="2.6" height="1.1" fill="#444" />
<rect x="138.4" y="398.6" width="2.6" height="1.1" fill="#444" />
<circle cx="146.8" cy="397.8" r="2" fill="none" stroke="#bdbdbd" stroke-width="0.8"/>
<circle cx="145.6" cy="396.8" r="2" fill="none" stroke="#bdbdbd" stroke-width="0.7"/>
<circle cx="152.4" cy="397.4" r="2.3" fill="none" stroke="#bdbdbd" stroke-width="0.8"/>
<path d="M152.4 395.1a2.3 2.3 0 0 1 0 4.6z" fill="#bdbdbd" />
<circle cx="158.6" cy="397.4" r="2.4" fill="none" stroke="#bdbdbd" stroke-width="0.8"/>
<path d="M156.4 398h4.4M158.6 395v2.8" fill="none" stroke="#bdbdbd" stroke-width="0.6" />
<text x="169.8" y="399.4" font-size="5.6" fill="#8c8c8c" textLength="9.8" lengthAdjust="spacingAndGlyphs" >Mode</text>
<text x="202.4" y="399.4" font-size="5.6" fill="#8c8c8c" textLength="1.6" lengthAdjust="spacingAndGlyphs" >T</text>
<text x="208.8" y="399.4" font-size="5.6" fill="#8c8c8c" textLength="12.2" lengthAdjust="spacingAndGlyphs" >TrkMat</text>
<text x="239" y="399.4" font-size="5.6" fill="#8c8c8c" textLength="11.4" lengthAdjust="spacingAndGlyphs" >Parent</text>
<ellipse cx="5.2" cy="407.5" rx="2.2" ry="1.5" fill="none" stroke="#c8c8c8" stroke-width="0.8"/>
<circle cx="5.2" cy="407.5" r="0.8" fill="#c8c8c8"/>
<rect x="8.6" y="404.1" width="5.8" height="7.2" fill="#333" />
<rect x="14.899999999999999" y="404.1" width="5.8" height="7.2" fill="#333" />
<rect x="21.2" y="404.1" width="5.8" height="7.2" fill="#333" />
<path d="M30.8 405.5l3 2.1l-3 2.1z" fill="#bdbdbd" />
<rect x="35.5" y="404.3" width="5.6" height="6.8" fill="#5f83f0" />
<path d="M112.2 409.1h5.4l-0.9-1.2v-1.6a1.8 1.8 0 0 0-3.6 0v1.6z" fill="#c4c4c4" />
<rect x="114.4" y="409.5" width="1" height="0.9" fill="#c4c4c4" />
<path d="M125 410.1l4.2-5" fill="none" stroke="#c8c8c8" stroke-width="0.9" />
<rect x="144.0" y="404.1" width="3.9" height="7.2" fill="#333" />
<rect x="148.4" y="404.1" width="3.9" height="7.2" fill="#333" />
<rect x="152.8" y="404.1" width="3.9" height="7.2" fill="#333" />
<rect x="157.2" y="404.1" width="3.9" height="7.2" fill="#333" />
<rect x="169.8" y="403.90000000000003" width="28.2" height="7.6" fill="#1b1b1b" />
<text x="172" y="409.90000000000003" font-size="6.6" fill="#d4d4d4" textLength="15.3" lengthAdjust="spacingAndGlyphs" >Normal</text>
<path d="M192.2 406.90000000000003l1.9 1.9l1.9-1.9" fill="none" stroke="#a0a0a0" stroke-width="0.8" />
<circle cx="241.2" cy="407.7" r="2.4" fill="none" stroke="#8a8a8a" stroke-width="0.8"/>
<path d="M240 406.90000000000003a1.4 1.4 0 0 1 2.4 0.8" fill="none" stroke="#8a8a8a" stroke-width="0.6" />
<rect x="247.4" y="403.90000000000003" width="36.2" height="7.6" fill="#1b1b1b" />
<text x="250" y="409.90000000000003" font-size="6.6" fill="#d4d4d4" textLength="10.7" lengthAdjust="spacingAndGlyphs" >None</text>
<path d="M279 406.90000000000003l1.7 1.7l1.7-1.7" fill="none" stroke="#a0a0a0" stroke-width="0.8" />
<ellipse cx="5.2" cy="416.9" rx="2.2" ry="1.5" fill="none" stroke="#c8c8c8" stroke-width="0.8"/>
<circle cx="5.2" cy="416.9" r="0.8" fill="#c8c8c8"/>
<rect x="8.6" y="413.5" width="5.8" height="7.2" fill="#262626" />
<rect x="14.899999999999999" y="413.5" width="5.8" height="7.2" fill="#262626" />
<rect x="21.2" y="413.5" width="5.8" height="7.2" fill="#262626" />
<path d="M30.8 414.9l3 2.1l-3 2.1z" fill="#bdbdbd" />
<rect x="35.5" y="413.7" width="5.6" height="6.8" fill="#d8453a" />
<path d="M112.2 418.5h5.4l-0.9-1.2v-1.6a1.8 1.8 0 0 0-3.6 0v1.6z" fill="#c4c4c4" />
<rect x="114.4" y="418.9" width="1" height="0.9" fill="#c4c4c4" />
<path d="M125 419.5l4.2-5" fill="none" stroke="#c8c8c8" stroke-width="0.9" />
<rect x="144.0" y="413.5" width="3.9" height="7.2" fill="#262626" />
<rect x="148.4" y="413.5" width="3.9" height="7.2" fill="#262626" />
<rect x="152.8" y="413.5" width="3.9" height="7.2" fill="#262626" />
<rect x="157.2" y="413.5" width="3.9" height="7.2" fill="#262626" />
<rect x="169.8" y="413.3" width="28.2" height="7.6" fill="#1b1b1b" />
<text x="172" y="419.3" font-size="6.6" fill="#d4d4d4" textLength="15.3" lengthAdjust="spacingAndGlyphs" >Normal</text>
<path d="M192.2 416.3l1.9 1.9l1.9-1.9" fill="none" stroke="#a0a0a0" stroke-width="0.8" />
<circle cx="241.2" cy="417.09999999999997" r="2.4" fill="none" stroke="#8a8a8a" stroke-width="0.8"/>
<path d="M240 416.3a1.4 1.4 0 0 1 2.4 0.8" fill="none" stroke="#8a8a8a" stroke-width="0.6" />
<rect x="247.4" y="413.3" width="36.2" height="7.6" fill="#1b1b1b" />
<text x="250" y="419.3" font-size="6.6" fill="#d4d4d4" textLength="10.7" lengthAdjust="spacingAndGlyphs" >None</text>
<path d="M279 416.3l1.7 1.7l1.7-1.7" fill="none" stroke="#a0a0a0" stroke-width="0.8" />
<rect x="200.6" y="403.7" width="36.8" height="8" fill="#444" />
<text x="44.9" y="410.2" font-size="6.6" fill="#c8c8c8" textLength="1.6" lengthAdjust="spacingAndGlyphs" >1</text>
<text x="44.8" y="419.6" font-size="6.6" fill="#c8c8c8" textLength="3.2" lengthAdjust="spacingAndGlyphs" >2</text>
<path d="M59.6 404.6l0.8 2l2 0.2l-1.5 1.3l0.5 2l-1.8-1.1l-1.8 1.1l0.5-2l-1.5-1.3l2-0.2z" fill="#d0d0d0" />
<rect x="63.2" y="403.7" width="46.2" height="7.9" fill="#2e2e2e" stroke="#b4b4b4" stroke-width="0.8"/>
<text x="66" y="410.2" font-size="7" fill="#cacaca" textLength="37" lengthAdjust="spacingAndGlyphs" font-weight="bold">Shape Layer 1</text>
<circle cx="120.8" cy="407.6" r="1.3" fill="none" stroke="#9a9a9a" stroke-width="0.6"/>
<rect x="57.4" y="414" width="4.6" height="6.8" fill="#a8d8f8" />
<rect x="58.2" y="414.8" width="3" height="1" fill="#e8f4ff" />
<text x="65.8" y="419.8" font-size="6.8" fill="#bcbcbc" textLength="7.6" lengthAdjust="spacingAndGlyphs" >BG</text>
<rect x="208.4" y="413.3" width="29.6" height="7.6" fill="#1b1b1b" />
<text x="211.2" y="419.3" font-size="6.6" fill="#d4d4d4" textLength="10.8" lengthAdjust="spacingAndGlyphs" >None</text>
<path d="M232.6 416.3l1.7 1.7l1.7-1.7" fill="none" stroke="#a0a0a0" stroke-width="0.8" />
<rect x="295.4" y="357" width="405" height="18.6" fill="#232323" />
<rect x="295.4" y="375.6" width="397" height="4" fill="#6b6b6b" />
<rect x="293.4" y="375.6" width="2.6" height="4.2" fill="#2f8df0" />
<rect x="691" y="375.6" width="2.2" height="4.2" fill="#2f8df0" />
<rect x="295.4" y="379.6" width="405" height="12.6" fill="#1f1f1f" />
<text x="297.8" y="387" font-size="6" fill="#b0b0b0" textLength="4.6" lengthAdjust="spacingAndGlyphs" >00s</text>
<text x="371" y="387" font-size="6" fill="#b0b0b0" textLength="7.8" lengthAdjust="spacingAndGlyphs" >01s</text>
<text x="450.4" y="387" font-size="6" fill="#b0b0b0" textLength="7.8" lengthAdjust="spacingAndGlyphs" >02s</text>
<rect x="375" y="388.6" width="0.6" height="3.4" fill="#8a8a8a" />
<rect x="295.4" y="392.2" width="405" height="8.2" fill="#6c6c6c" />
<rect x="295.4" y="400.4" width="405" height="2.6" fill="#19b526" />
<rect x="295.4" y="403" width="405" height="9.2" fill="#5b74d8" />
<rect x="295.4" y="403" width="405" height="2" fill="#7f92e8" />
<rect x="295.4" y="410.4" width="405" height="1.8" fill="#4f63c0" />
<rect x="295.4" y="412.4" width="405" height="8.8" fill="#9a4a44" />
<rect x="295.4" y="412.4" width="405" height="1.2" fill="#b05a52" />
<rect x="295.4" y="421.2" width="405" height="30" fill="#2c2c2c" />
<rect x="295.8" y="381" width="1" height="70" fill="#3a8ef0" />
<path d="M293.3 381h5.6v5l-2.8 4.4l-2.8-4.4z" fill="#2f8df0" />
<rect x="293.6" y="392.6" width="1.8" height="7.6" fill="#2f8df0" />
<path d="M31.3 97.0L74.0 28.6L76.2 31.3L77.3 18.2L66.4 25.4L69.7 26.0L29.9 96.2z" fill="#ee1c25" />
<path d="M76.0 263.9L157.0 206.4L157.3 209.7L164 198L150.9 201.0L153.9 202.2L75.2 262.9z" fill="#ee1c25" />
<path d="M155.6 471.6L106.2 425.2L109.9 425.2L97.3 421L102.2 433.3L102.0 429.7L151.0 476.4z" fill="#ee1c25" />
<rect x="700" y="1" width="1" height="451" fill="#333" />
<path d="M451 451.8V406a22 26 0 0 1 22-26H701V451.8z" fill="#fff" />
<rect x="484" y="385.6" width="47" height="62.4" fill="#2a9be9" rx="2.4"/>
<path d="M533.2 387.2h3.6l1.8 1.8v54.2l-1.8 1.8h-3.6" fill="none" stroke="#2a9be9" stroke-width="2.2" />
<circle cx="508" cy="414" r="14.4" fill="none" stroke="#fff" stroke-width="5.9"/>
<path d="M496.6 424.6L483.6 433.8" fill="none" stroke="#fff" stroke-width="5.6" />
<text x="552" y="396.6" font-size="14" fill="#9c9c9c" stroke="#9c9c9c" stroke-width="0.45" textLength="57.2" lengthAdjust="spacingAndGlyphs">PConline</text>
<text transform="translate(548.4 445) scale(0.68 1)" x="0" y="0" font-size="58.5" fill="#555">I</text>
<text transform="translate(558.7 445) scale(0.762 1)" x="0" y="0" font-size="58.5" fill="#555">T</text>
<text transform="translate(584.2 440.9) scale(1.113 1)" x="0" y="0" font-size="45.9" fill="#555">百</text>
<text transform="translate(632.4 441.5) scale(0.855 1)" x="0" y="0" font-size="43.4" fill="#555">科</text>
<rect x="2.1" y="1" width="0.9" height="451" fill="#1b1b1b" />
<rect x="0" y="0" width="702" height="0.9" fill="#000" />
<rect x="0" y="0" width="0.9" height="453" fill="#000" />
<rect x="0.9" y="0.9" width="1.25" height="451.2" fill="#aaaaaa" />
<rect x="701" y="0" width="1" height="453" fill="#000" />
<rect x="0" y="451.8" width="702" height="1.2" fill="#000" />
</g>
</svg>
</body></html>
